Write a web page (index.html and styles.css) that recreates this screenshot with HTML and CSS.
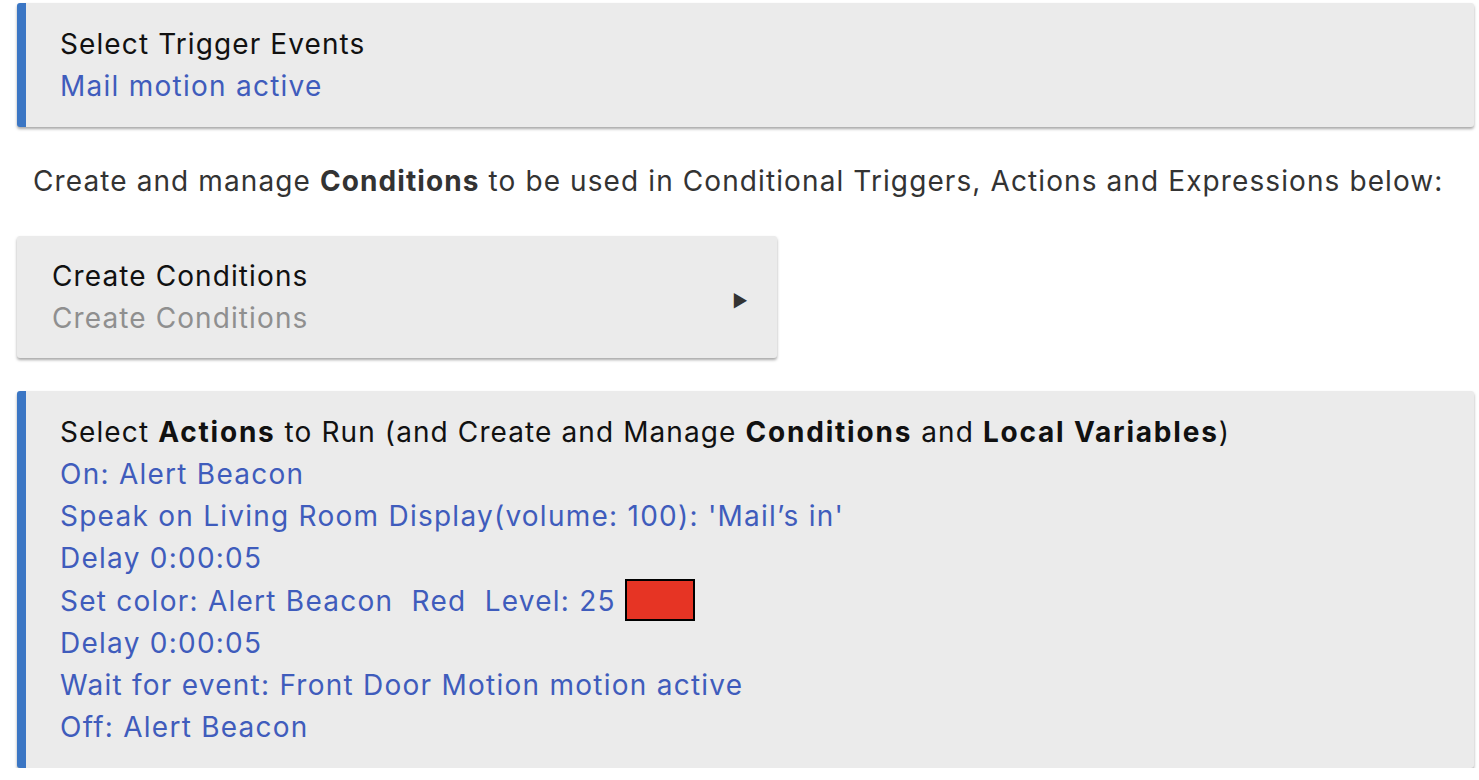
FILE: index.html
```html
<!DOCTYPE html>
<html lang="en">
<head>
  <meta charset="UTF-8">
  <meta name="viewport" content="width=device-width, initial-scale=1.0">
  <title>Rule Machine</title>
  <link rel="stylesheet" href="styles.css">
</head>
<body>
  <div class="page">
    <!-- Триггеры -->
    <div class="card card-marked">
      <div class="card-title">Select Trigger Events</div>
      <a class="card-link" href="#">Mail motion active</a>
    </div>

    <p class="note">Create and manage <b>Conditions</b> to be used in Conditional Triggers, Actions and Expressions below:</p>

    <!-- Условия -->
    <div class="card card-small">
      <div>
        <div class="card-title">Create Conditions</div>
        <div class="card-sub">Create Conditions</div>
      </div>
      <span class="arrow">&#9654;</span>
    </div>

    <!-- Действия -->
    <div class="card card-marked card-actions">
      <div class="card-title">Select <b>Actions</b> to Run (and Create and Manage <b>Conditions</b> and <b>Local Variables</b>)</div>
      <a class="card-link" href="#">On: Alert Beacon</a>
      <a class="card-link" href="#">Speak on Living Room Display(volume: 100): 'Mail’s in'</a>
      <a class="card-link" href="#">Delay 0:00:05</a>
      <a class="card-link" href="#">Set color: Alert Beacon&nbsp; Red&nbsp; Level: 25 <span class="swatch"></span></a>
      <a class="card-link" href="#">Delay 0:00:05</a>
      <a class="card-link" href="#">Wait for event: Front Door Motion motion active</a>
      <a class="card-link" href="#">Off: Alert Beacon</a>
    </div>
  </div>
</body>
</html>
```

FILE: styles.css
```css
/* Общие стили */
body {
  margin: 0;
  background-color: #fff;
  font-family: Inter, Roboto, sans-serif;
  font-size: 28px;
  line-height: 42px;
  letter-spacing: 1.1px;
  color: #111;
}

.page {
  padding: 3px 5px 0 17px;
}

/* Карточки */
.card {
  background-color: #ebebeb;
  border-radius: 3px;
  box-shadow: 0 2px 3px rgba(0, 0, 0, 0.35);
  padding: 20px 20px 20px 43px;
}

.card-marked {
  border-left: 9px solid #3b76c4;
  padding-left: 34px;
}

.card-title b,
.note b {
  font-weight: 700;
  letter-spacing: 1.8px;
}

.card-link {
  display: block;
  color: #3f5cbc;
  letter-spacing: 1.25px;
  text-decoration: none;
}

.card-sub {
  color: #8f8f8f;
}

/* Текст между карточками */
.note {
  margin: 33px 0 34px 16px;
  color: #333;
}

.note b {
  letter-spacing: 1.1px;
}

/* Карточка условий */
.card-small {
  width: 760px;
  box-sizing: border-box;
  padding: 19px 28px 19px 35px;
  display: flex;
  align-items: center;
  justify-content: space-between;
}

.arrow {
  font-size: 17px;
  color: #333;
  margin-top: 8px;
}

.card-actions {
  margin-top: 33px;
}

/* Цветной квадрат */
.swatch {
  display: inline-block;
  width: 66px;
  height: 38px;
  background-color: #e63424;
  border: 2px solid #000;
  vertical-align: -10px;
}
```
